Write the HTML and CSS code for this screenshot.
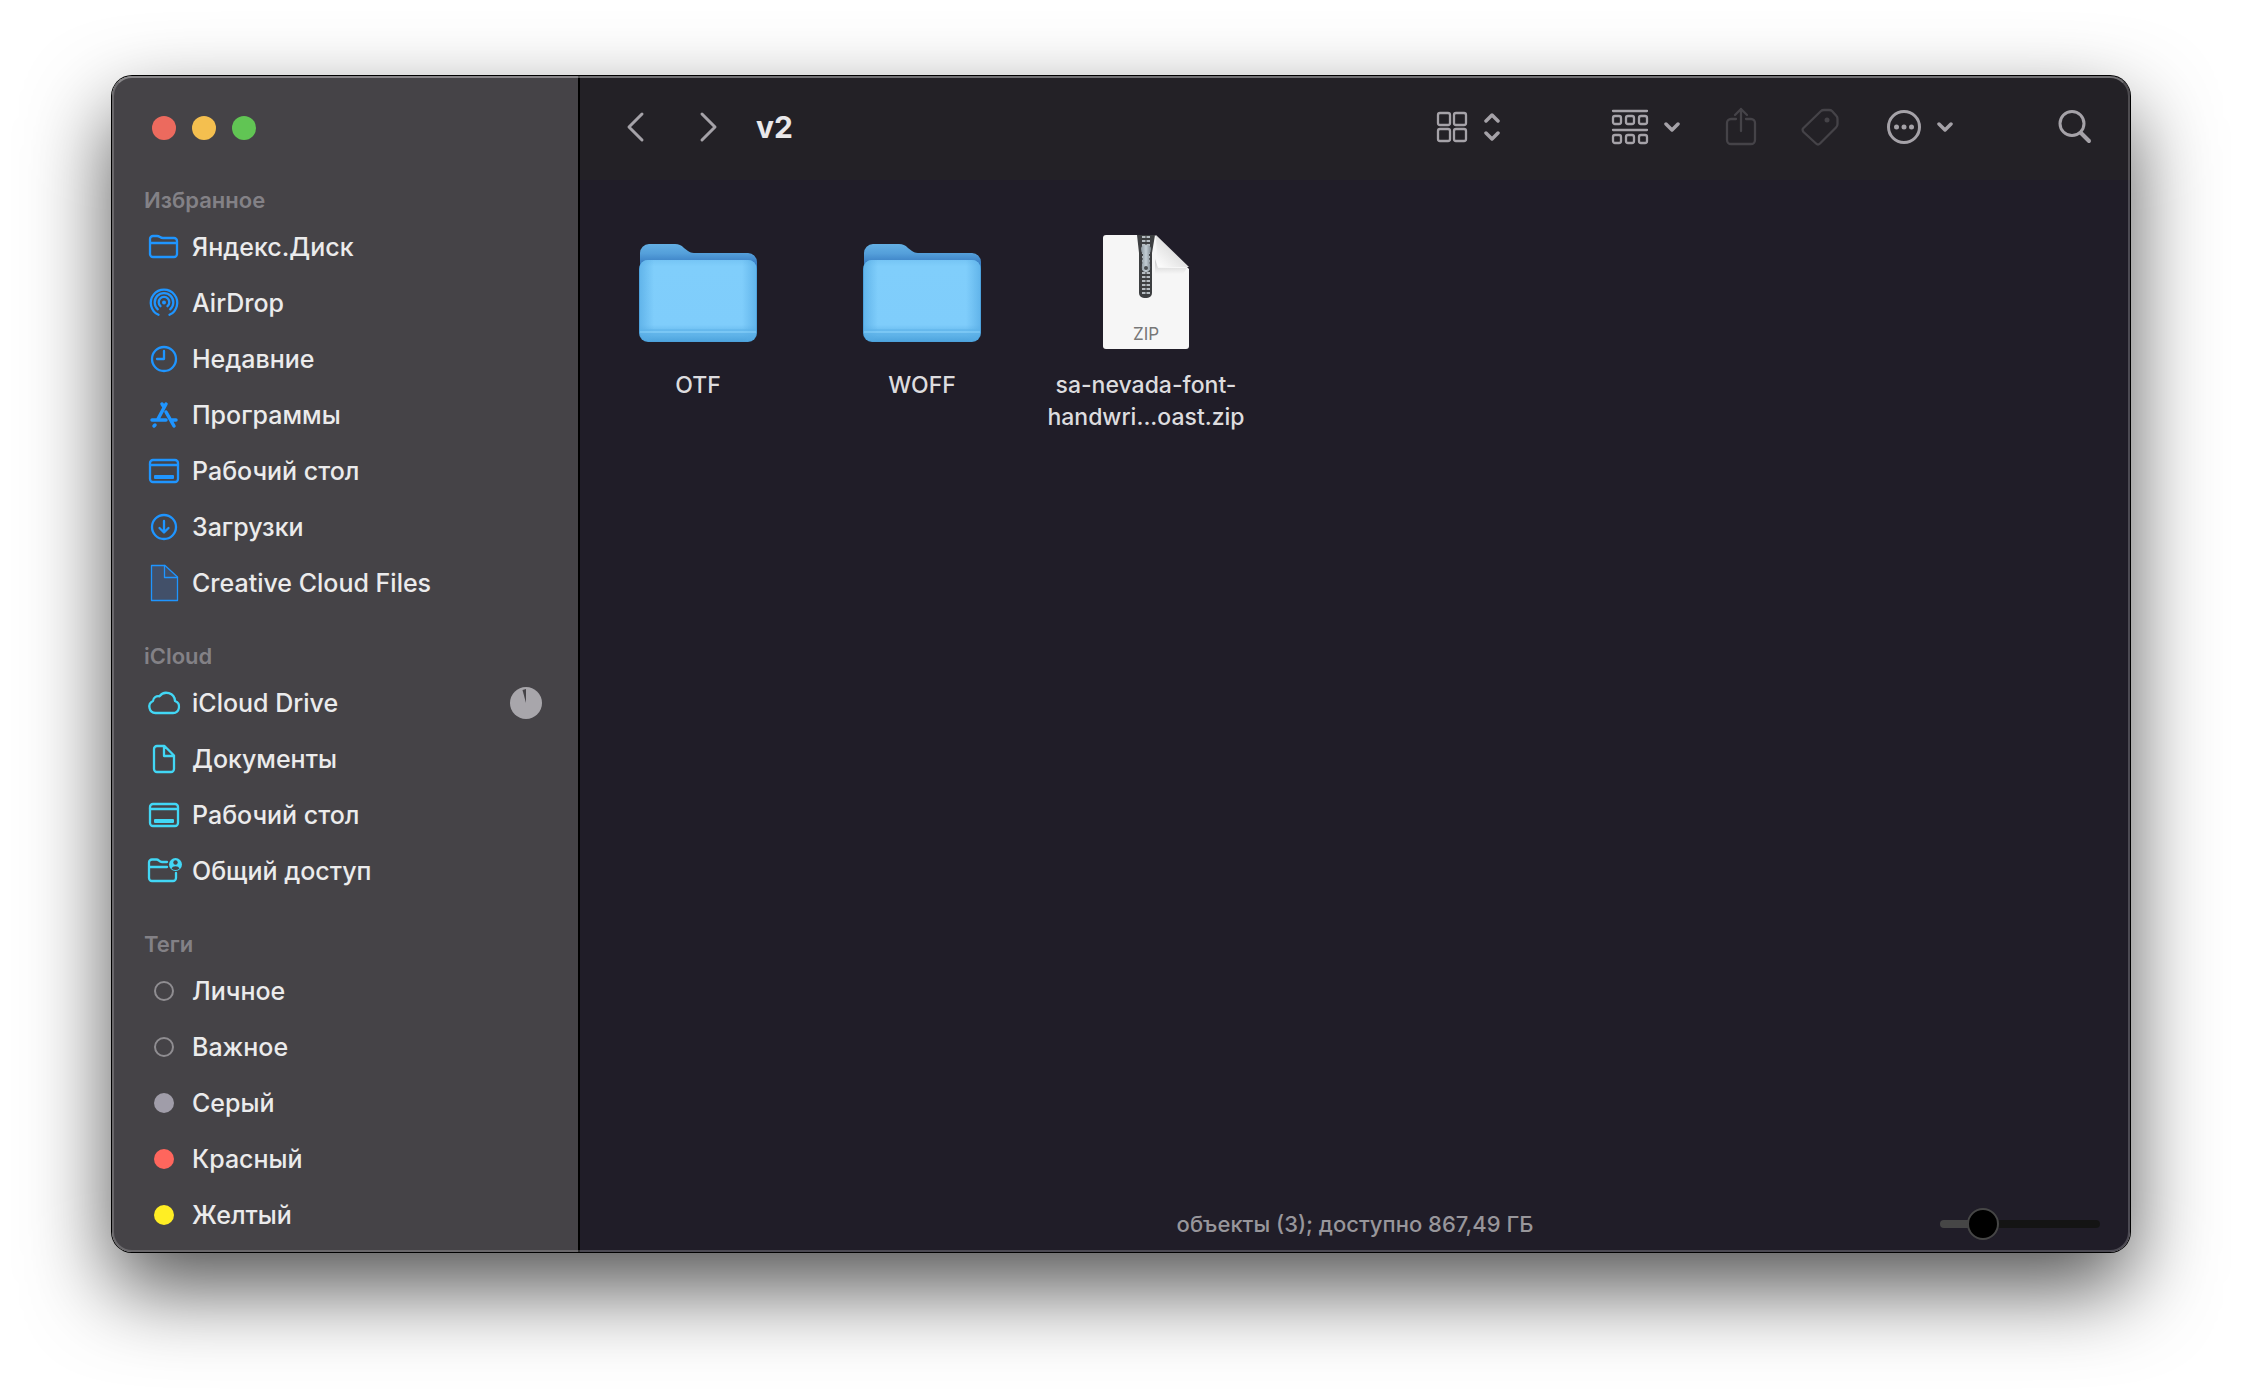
FILE: index.html
```html
<!DOCTYPE html>
<html lang="ru">
<head>
  <meta charset="UTF-8">
  <meta name="viewport" content="width=device-width, initial-scale=1.0">
  <title>v2</title>
  <link rel="stylesheet" href="styles.css">
</head>
<body>
  <!-- Shared icon shapes -->
  <svg class="sprite" aria-hidden="true">
    <symbol id="icon-desktop" viewBox="0 0 32 32">
      <rect x="2" y="5" width="28" height="22" rx="3"/>
      <path d="M2 10h28"/>
      <rect class="solid" x="6" y="20" width="20" height="4" rx="1"/>
    </symbol>
    <symbol id="icon-chevron" viewBox="0 0 16 12">
      <path d="M2 3l6 6 6-6"/>
    </symbol>
    <symbol id="icon-folder" viewBox="0 0 128 128">
      <path d="M6 24a9 9 0 0 1 9-9h26c4 0 6 1 9 4l4 3c3 2 5 2 8 2h52a9 9 0 0 1 9 9v40H6z" fill="url(#folderBack)"/>
      <rect x="5" y="31" width="118" height="82" rx="9" fill="#4da2dc"/>
      <rect x="6" y="31" width="116" height="81" rx="8" fill="url(#folderFront)"/>
      <rect x="6" y="31" width="116" height="81" rx="8" fill="url(#folderSides)"/>
      <path d="M6 101h116M6 105h116" stroke="#5eb2e8" stroke-width="1"/>
      <path d="M6 103h116" stroke="#8bd2fa" stroke-width="1"/>
    </symbol>
    <defs>
      <linearGradient id="folderBack" x1="0" y1="15" x2="0" y2="34" gradientUnits="userSpaceOnUse">
        <stop offset="0" stop-color="#64b0e4"/>
        <stop offset="0.5" stop-color="#549fda"/>
        <stop offset="1" stop-color="#3a7fc4"/>
      </linearGradient>
      <linearGradient id="folderFront" x1="0" y1="0" x2="0" y2="1">
        <stop offset="0" stop-color="#76c5f5"/>
        <stop offset="0.08" stop-color="#80cefb"/>
        <stop offset="0.8" stop-color="#7fcdfb"/>
        <stop offset="0.9" stop-color="#66b9ed"/>
        <stop offset="1" stop-color="#4fa5de"/>
      </linearGradient>
      <linearGradient id="folderSides" x1="0" y1="0" x2="1" y2="0">
        <stop offset="0" stop-color="#56abe4" stop-opacity="0.7"/>
        <stop offset="0.12" stop-color="#56abe4" stop-opacity="0"/>
        <stop offset="0.88" stop-color="#56abe4" stop-opacity="0"/>
        <stop offset="1" stop-color="#56abe4" stop-opacity="0.7"/>
      </linearGradient>
    </defs>
  </svg>

  <div class="window">
    <aside class="sidebar">
      <div class="lights">
        <button class="light light-close" aria-label="Закрыть"></button>
        <button class="light light-min" aria-label="Свернуть"></button>
        <button class="light light-max" aria-label="Развернуть"></button>
      </div>

      <nav class="section favorites">
        <h2>Избранное</h2>
        <a href="#">
          <svg class="icon" viewBox="0 0 32 32"><path d="M2 8a3 3 0 0 1 3-3h4c3 0 3 2 6 2h11a3 3 0 0 1 3 3v13a3 3 0 0 1-3 3H5a3 3 0 0 1-3-3zM2 12h27"/></svg>
          <span>Яндекс.Диск</span>
        </a>
        <a href="#">
          <svg class="icon" viewBox="0 0 32 32"><path d="M10.500 27.800a13.200 13.200 0 1 1 11 0M9.800 22.300a9.300 9.300 0 1 1 12.400 0M12.500 19.200a5.300 5.300 0 1 1 7 0"/><circle class="solid" cx="16" cy="15.500" r="2"/></svg>
          <span>AirDrop</span>
        </a>
        <a href="#">
          <svg class="icon" viewBox="0 0 32 32"><circle cx="16" cy="16" r="12"/><path d="M16 8v8H9"/></svg>
          <span>Недавние</span>
        </a>
        <a href="#">
          <svg class="icon" viewBox="0 0 32 32"><g stroke-width="3.500"><path d="M18 5L10 20M14 5l2 3M18 13l8 14M4 21h14M23 21h5M7 26l-1 1"/></g></svg>
          <span>Программы</span>
        </a>
        <a href="#">
          <svg class="icon"><use href="#icon-desktop"/></svg>
          <span>Рабочий стол</span>
        </a>
        <a href="#">
          <svg class="icon" viewBox="0 0 32 32"><circle cx="16" cy="16" r="12"/><path d="M16 10v11M11.500 17l4.500 4.500 4.500-4.500"/></svg>
          <span>Загрузки</span>
        </a>
        <a href="#">
          <svg class="icon icon-tall" viewBox="0 0 32 38"><path class="tinted" d="M3.500 1.500H17L29.500 13v23.500h-26z"/><path class="thin" d="M16.500 1.500V13.500h13"/></svg>
          <span>Creative Cloud Files</span>
        </a>
      </nav>

      <nav class="section icloud">
        <h2>iCloud</h2>
        <a href="#">
          <svg class="icon" viewBox="0 0 32 32"><path d="M7.500 26A6.300 6.300 0 0 1 5 14a5.200 5.200 0 0 1 6.500-4.700A8.600 8.600 0 0 1 27 14A6.200 6.200 0 0 1 25 26z"/></svg>
          <span>iCloud Drive</span>
          <svg class="progress" viewBox="0 0 32 32" role="img" aria-label="Загрузка"><circle cx="16" cy="16" r="16"/><path d="M16 16L12.500 3L16 2z"/></svg>
        </a>
        <a href="#">
          <svg class="icon" viewBox="0 0 32 32"><path d="M6 6a3 3 0 0 1 3-3h7.500L26 12.500V26a3 3 0 0 1-3 3H9a3 3 0 0 1-3-3zM16 3.500V13h9.500"/></svg>
          <span>Документы</span>
        </a>
        <a href="#">
          <svg class="icon"><use href="#icon-desktop"/></svg>
          <span>Рабочий стол</span>
        </a>
        <a href="#">
          <svg class="icon" viewBox="0 0 32 32"><path d="M19 7h-5c-3 0-3-2.500-5.500-2.500H4a3 3 0 0 0-3 3V23a3 3 0 0 0 3 3h21a3 3 0 0 0 3-3v-5M1 12h18"/><circle class="solid" cx="27.500" cy="9.500" r="6.500"/><circle class="hole" cx="27.500" cy="7.500" r="2.200"/><path class="hole" d="M23.500 13.500a4.200 3.400 0 0 1 8 0a6 6 0 0 1-8 0z"/></svg>
          <span>Общий доступ</span>
        </a>
      </nav>

      <nav class="section tags">
        <h2>Теги</h2>
        <a href="#"><i class="dot"></i><span>Личное</span></a>
        <a href="#"><i class="dot"></i><span>Важное</span></a>
        <a href="#"><i class="dot dot-gray"></i><span>Серый</span></a>
        <a href="#"><i class="dot dot-red"></i><span>Красный</span></a>
        <a href="#"><i class="dot dot-yellow"></i><span>Желтый</span></a>
      </nav>
    </aside>

    <main class="content">
      <header class="toolbar">
        <div class="history">
          <button aria-label="Назад"><svg width="32" height="36" viewBox="0 0 32 36"><path d="M22 5L9 18l13 13"/></svg></button>
          <button aria-label="Вперед"><svg width="32" height="36" viewBox="0 0 32 36"><path d="M10 5l13 13-13 13"/></svg></button>
        </div>
        <h1>v2</h1>

        <button class="view" aria-label="Вид">
          <svg width="32" height="32" viewBox="0 0 32 32"><rect x="2" y="2" width="12" height="12" rx="2"/><rect x="18" y="2" width="12" height="12" rx="2"/><rect x="2" y="18" width="12" height="12" rx="2"/><rect x="18" y="18" width="12" height="12" rx="2"/></svg>
          <svg class="bold" width="16" height="28" viewBox="0 0 16 28"><path d="M2 8l6-6 6 6M2 20l6 6 6-6"/></svg>
        </button>
        <button class="group" aria-label="Группировка">
          <svg width="36" height="36" viewBox="0 0 36 36"><path d="M1 2h34M1 21h34"/><rect x="1" y="7" width="8" height="8" rx="2"/><rect x="14" y="7" width="8" height="8" rx="2"/><rect x="27" y="7" width="8" height="8" rx="2"/><rect x="1" y="26" width="8" height="8" rx="2"/><rect x="14" y="26" width="8" height="8" rx="2"/><rect x="27" y="26" width="8" height="8" rx="2"/></svg>
          <svg class="bold" width="16" height="12"><use href="#icon-chevron"/></svg>
        </button>
        <button class="share" aria-label="Поделиться" disabled>
          <svg width="32" height="40" viewBox="0 0 32 40"><path d="M11 12H6a4 4 0 0 0-4 4v17a4 4 0 0 0 4 4h20a4 4 0 0 0 4-4V16a4 4 0 0 0-4-4h-5M16 24V2M10 8l6-6 6 6"/></svg>
        </button>
        <button class="tag" aria-label="Теги" disabled>
          <svg width="38" height="38" viewBox="0 0 38 38"><path d="M2 20.500L20 3Q21 2 23 2H28Q30 2 31 3L35.500 8Q36.500 9 36.500 11V16Q36.500 18 35 19.500L19 35.500Q17 37.500 15 35.500L2.500 24Q1 22 2 20.500z"/><circle class="solid" cx="26" cy="12" r="2.500"/></svg>
        </button>
        <button class="more" aria-label="Еще">
          <svg width="34" height="34" viewBox="0 0 34 34"><circle cx="17" cy="17" r="15.500"/><circle class="solid" cx="9.500" cy="17" r="2.500"/><circle class="solid" cx="17" cy="17" r="2.500"/><circle class="solid" cx="24.500" cy="17" r="2.500"/></svg>
          <svg class="bold" width="16" height="12"><use href="#icon-chevron"/></svg>
        </button>
        <button class="search" aria-label="Поиск">
          <svg width="36" height="36" viewBox="0 0 36 36"><circle cx="15" cy="14.500" r="12"/><path class="handle" d="M24 24l8 8"/></svg>
        </button>
      </header>

      <section class="files">
        <a class="file" href="#">
          <svg class="thumb"><use href="#icon-folder"/></svg>
          <span>OTF</span>
        </a>
        <a class="file" href="#">
          <svg class="thumb"><use href="#icon-folder"/></svg>
          <span>WOFF</span>
        </a>
        <a class="file" href="#">
          <svg class="thumb" viewBox="0 0 128 128">
            <defs>
              <linearGradient id="fold" x1="0" y1="1" x2="1" y2="0">
                <stop offset="0" stop-color="#ffffff"/>
                <stop offset="0.5" stop-color="#e2e2e2"/>
              </linearGradient>
              <linearGradient id="foldShade" x1="0" y1="0" x2="0" y2="1">
                <stop offset="0" stop-color="#c4c4c4"/>
                <stop offset="1" stop-color="#f6f6f6"/>
              </linearGradient>
              <linearGradient id="pull" x1="0" y1="0" x2="1" y2="0">
                <stop offset="0" stop-color="#8d989f"/>
                <stop offset="0.5" stop-color="#c3ced5"/>
                <stop offset="1" stop-color="#7e888f"/>
              </linearGradient>
            </defs>
            <path d="M24 6h49L107 40v77a3 3 0 0 1-3 3H24a3 3 0 0 1-3-3V9a3 3 0 0 1 3-3z" fill="#f6f6f6"/>
            <path d="M73 30l3 9h29l-4 6H73z" fill="url(#foldShade)"/>
            <path d="M74 6L107 38H79a4 4 0 0 1-4-4z" fill="url(#fold)"/>
            <path d="M55 6h18l-3 18v40a5 5 0 0 1-5 5h-3a5 5 0 0 1-5-5V24z" fill="#3d3f41"/>
            <path d="M64 7v60" stroke="#b5bcc1" stroke-width="8" stroke-dasharray="2 2"/>
            <path d="M64 7v60" stroke="#3d3f41" stroke-width="1"/>
            <path d="M59 20q0-4 5-4t5 4q0 3-2 5l1 12q1 6-4 6t-4-6l1-12q-2-2-2-5z" fill="url(#pull)"/>
            <circle cx="64" cy="39" r="2" fill="#4a4e51"/>
            <text class="zip" x="64" y="111">ZIP</text>
          </svg>
          <span>sa-nevada-font-<br>handwri...oast.zip</span>
        </a>
      </section>

      <footer class="status">
        <p>объекты (3); доступно 867,49 ГБ</p>
        <input type="range" min="0" max="100" value="21" aria-label="Размер значков">
      </footer>
    </main>
  </div>
</body>
</html>
```

FILE: styles.css
```css
* {
  box-sizing: border-box;
}

body, h1, h2, p {
  margin: 0;
  padding: 0;
}

body {
  padding: 76px 112px 148px;
  background: #fff;
  font-family: Inter, "Liberation Sans", sans-serif;
}

a {
  color: inherit;
  text-decoration: none;
}

button {
  display: flex;
  align-items: center;
  padding: 0;
  border: none;
  background: none;
  color: #a5a2a8;
}

button:disabled {
  color: #454348;
}

svg {
  display: block;
  flex: none;
}

.sprite {
  position: absolute;
  width: 0;
  height: 0;
}

.window {
  position: relative;
  display: flex;
  height: calc(100vh - 224px);
  border-radius: 20px;
  overflow: hidden;
  box-shadow: 0 0 0 1px #000, 0 36px 84px rgba(0, 0, 0, 0.68);
}

/* light rim on top of both panes */
.window::after {
  content: "";
  position: absolute;
  inset: 0;
  border: 2px solid rgba(255, 255, 255, 0.2);
  border-top-color: rgba(255, 255, 255, 0.36);
  border-radius: 20px;
  pointer-events: none;
}

/* Sidebar */
.sidebar {
  flex: none;
  width: 468px;
  padding: 0 36px 0 32px;
  overflow: hidden;
  border-right: 2px solid #000;
  background: #454347;
}

.lights {
  display: flex;
  align-items: center;
  gap: 16px;
  height: 105px;
  padding: 0 0 2px 8px;
}

.light {
  width: 24px;
  height: 24px;
  border-radius: 50%;
}

.light-close {
  background: #ec6a5e;
}

.light-min {
  background: #f4bf4f;
}

.light-max {
  background: #61c554;
}

.section + .section {
  margin-top: 26px;
}

.section h2 {
  color: #838186;
  font-size: 22px;
  font-weight: 600;
  line-height: 38px;
}

.section a {
  display: flex;
  align-items: center;
  gap: 12px;
  height: 56px;
  padding-left: 4px;
  color: #ebebec;
  font-size: 25px;
  font-weight: 500;
}

.icon {
  width: 32px;
  height: 32px;
  overflow: visible;
  fill: none;
  stroke: currentColor;
  stroke-width: 2.3;
  stroke-linecap: round;
  stroke-linejoin: round;
  color: #1f95ff;
}

.icon-tall {
  height: 38px;
}

.icloud .icon {
  color: #42d7f5;
}

.solid {
  fill: currentColor;
  stroke: none;
}

.hole {
  fill: #454347;
  stroke: none;
}

.thin {
  stroke-width: 1.3;
}

.tinted {
  fill: #425069;
  stroke-width: 1.3;
}

.progress {
  width: 32px;
  height: 32px;
  margin-left: auto;
  fill: #a8a6ab;
}

.progress path {
  fill: #454347;
}

.dot {
  width: 20px;
  height: 20px;
  margin: 0 6px;
  border: 2px solid #8f8d91;
  border-radius: 50%;
}

.dot-gray {
  border: none;
  background: #a09da9;
}

.dot-red {
  border: none;
  background: #ff665d;
}

.dot-yellow {
  border: none;
  background: #ffee24;
}

/* Main pane */
.content {
  display: flex;
  flex: 1;
  flex-direction: column;
  min-width: 0;
  background: #201d28;
}

.toolbar {
  display: flex;
  align-items: center;
  height: 104px;
  padding: 0 37px 2px 40px;
  background: #232126;
}

.toolbar svg {
  fill: none;
  stroke: currentColor;
  stroke-width: 2;
  stroke-linecap: round;
  stroke-linejoin: round;
}

.history {
  display: flex;
  gap: 40px;
}

.history svg,
.more svg,
.search svg {
  stroke-width: 3;
}

.toolbar .bold {
  stroke-width: 3.5;
}

.toolbar .solid {
  stroke: none;
  fill: currentColor;
}

.toolbar h1 {
  margin: 0 auto 0 32px;
  color: #e9e8ea;
  font-size: 30px;
  font-weight: 700;
}

.view,
.group,
.more {
  gap: 16px;
}

.view {
  margin-right: 112px;
}

.group {
  margin-right: 45px;
}

.share {
  margin-right: 44px;
}

.tag {
  margin-right: 48px;
}

.more {
  margin-right: 104px;
}

.toolbar .view svg:first-child,
.toolbar .group svg:first-child {
  overflow: visible;
  stroke-width: 2.3;
}

.toolbar .share svg,
.toolbar .tag svg {
  stroke-width: 2.3;
}

.toolbar .handle {
  stroke-width: 4;
}

.files {
  display: flex;
  flex: 1;
  flex-wrap: wrap;
  align-content: flex-start;
  padding: 49px 6px;
}

.file {
  display: flex;
  flex-direction: column;
  align-items: center;
  gap: 12px;
  width: 224px;
  color: #dddcdf;
  font-size: 23px;
  font-weight: 500;
  line-height: 32px;
  text-align: center;
  white-space: nowrap;
}

.thumb {
  width: 128px;
  height: 128px;
}

.zip {
  fill: #777;
  font-size: 17px;
  font-weight: 400;
  text-anchor: middle;
}

/* Status bar: text in the middle, slider on the right */
.status {
  display: grid;
  grid-template-columns: 1fr auto 1fr;
  align-items: center;
  height: 56px;
  padding: 0 30px;
}

.status p {
  grid-column: 2;
  color: #98969b;
  font-size: 22px;
  font-weight: 500;
}

.status input {
  justify-self: end;
  width: 160px;
  height: 32px;
  margin: 0;
  appearance: none;
  background: none;
}

.status input::-webkit-slider-runnable-track {
  height: 8px;
  border-radius: 4px;
  background: linear-gradient(90deg, #464646 27%, #141414 27%);
}

.status input::-webkit-slider-thumb {
  width: 32px;
  height: 32px;
  margin-top: -12px;
  appearance: none;
  border: 2px solid #464646;
  border-radius: 50%;
  background: #000;
}
```
